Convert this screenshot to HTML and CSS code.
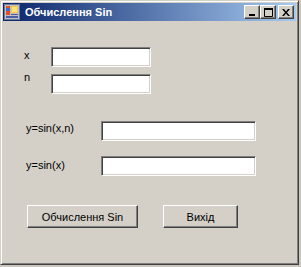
FILE: index.html
```html
<!DOCTYPE html>
<html lang="uk">
<head>
    <meta charset="UTF-8">
    <title>Обчислення Sin</title>
    <link rel="stylesheet" href="styles.css">
</head>
<body>
    <div class="window">
        <div class="titlebar">
            <svg class="app-icon" width="16" height="16" viewBox="0 0 16 16">
                <rect x="0.5" y="0.5" width="15" height="15" fill="#c0c0c0" stroke="#6b7a9a"/>
                <rect x="2" y="2" width="4" height="9" fill="#e0502c"/>
                <rect x="2" y="4" width="4" height="3" fill="#3f6fd0"/>
                <rect x="7" y="2" width="7" height="7" fill="#f5c542"/>
                <rect x="8" y="3" width="5" height="5" fill="#fbe27a"/>
                <rect x="2" y="12" width="12" height="2" fill="#4a5fa8"/>
                <rect x="7" y="10" width="7" height="1" fill="#4a5fa8"/>
            </svg>
            <span class="title">Обчислення Sin</span>
            <div class="caption-buttons">
                <div class="cap-btn">
                    <svg width="8" height="7" viewBox="0 0 8 7"><rect x="1" y="5" width="6" height="2" fill="#000"/></svg>
                </div>
                <div class="cap-btn">
                    <svg width="9" height="9" viewBox="0 0 9 9"><path d="M0.5 1.5h8v7h-8z" fill="none" stroke="#000"/><rect x="0" y="0" width="9" height="2" fill="#000"/></svg>
                </div>
                <div class="cap-btn close">
                    <svg width="8" height="7" viewBox="0 0 8 7"><path d="M0 0h2l2 2.5 2-2.5h2l-3 3.5 3 3.5h-2l-2-2.5-2 2.5h-2l3-3.5z" fill="#000"/></svg>
                </div>
            </div>
        </div>

        <div class="client">
            <div class="row short first">
                <label for="x">x</label>
                <input type="text" id="x" class="field small">
            </div>
            <div class="row short second">
                <label for="n">n</label>
                <input type="text" id="n" class="field small">
            </div>

            <div class="row long first-long">
                <label for="ysn">y=sin(x,n)</label>
                <input type="text" id="ysn" class="field wide">
            </div>
            <div class="row long second-long">
                <label for="ys">y=sin(x)</label>
                <input type="text" id="ys" class="field wide">
            </div>

            <div class="buttons">
                <button class="btn calc">Обчислення Sin</button>
                <button class="btn exit">Вихід</button>
            </div>
        </div>
    </div>
</body>
</html>
```

FILE: styles.css
```css
body {
    margin: 0;
    background-color: #c9c6be;
    font-family: 'Liberation Sans', Arial, sans-serif;
    font-size: 11px;
    color: #000000;
}
.window {
    box-sizing: border-box;
    width: 299px;
    height: 265px;
    padding: 2px;
    background-color: #d4d0c8;
    border: 1px solid;
    border-color: #d4d0c8 #404040 #404040 #d4d0c8;
    box-shadow: inset 1px 1px #ffffff, inset -1px -1px #808080;
    display: flex;
    flex-direction: column;
}
.titlebar {
    height: 18px;
    display: flex;
    align-items: center;
    padding: 0 2px 0 1px;
    background: linear-gradient(to right, #0a246a, #a6caf0);
}
.app-icon {
    flex: none;
    margin-right: 5px;
}
.title {
    color: #ffffff;
    font-weight: bold;
    font-size: 11px;
    flex: 1;
    white-space: nowrap;
}
.caption-buttons {
    display: flex;
    align-items: center;
}
.cap-btn {
    box-sizing: border-box;
    width: 16px;
    height: 14px;
    background-color: #d4d0c8;
    border: 1px solid;
    border-color: #ffffff #404040 #404040 #ffffff;
    box-shadow: inset -1px -1px #808080;
    display: flex;
    justify-content: center;
    align-items: center;
}
.cap-btn.close {
    margin-left: 2px;
}
.client {
    flex: 1;
    padding-top: 26px;
}
.row {
    display: flex;
    align-items: center;
}
.row label {
    flex: none;
    line-height: 13px;
}
.row.short {
    padding-left: 21px;
}
.row.short label {
    width: 27px;
}
.row.first label {
    margin-top: -3px;
}
.row.second {
    margin-top: 7px;
}
.row.second label {
    margin-top: -14px;
}
.row.long {
    padding-left: 23px;
}
.row.long label {
    width: 75px;
}
.row.first-long {
    margin-top: 27px;
}
.row.first-long label {
    margin-top: -5px;
}
.row.second-long {
    margin-top: 15px;
}
.row.second-long label {
    margin-top: -2px;
}
.field {
    box-sizing: border-box;
    height: 20px;
    margin: 0;
    padding: 1px 3px;
    background-color: #ffffff;
    border: 1px solid;
    border-color: #808080 #ffffff #ffffff #808080;
    box-shadow: inset 1px 1px #404040, inset -1px -1px #d4d0c8;
    font-family: 'Liberation Sans', Arial, sans-serif;
    font-size: 11px;
    outline: none;
}
.field.small {
    width: 100px;
}
.field.wide {
    width: 155px;
}
.buttons {
    display: flex;
    gap: 25px;
    padding-left: 24px;
    margin-top: 29px;
}
.btn {
    box-sizing: border-box;
    height: 23px;
    padding: 0;
    background-color: #d4d0c8;
    border: 1px solid;
    border-color: #ffffff #404040 #404040 #ffffff;
    box-shadow: inset -1px -1px #808080;
    font-family: 'Liberation Sans', Arial, sans-serif;
    font-size: 11px;
    color: #000000;
}
.btn.calc {
    width: 111px;
}
.btn.exit {
    width: 75px;
}
```
